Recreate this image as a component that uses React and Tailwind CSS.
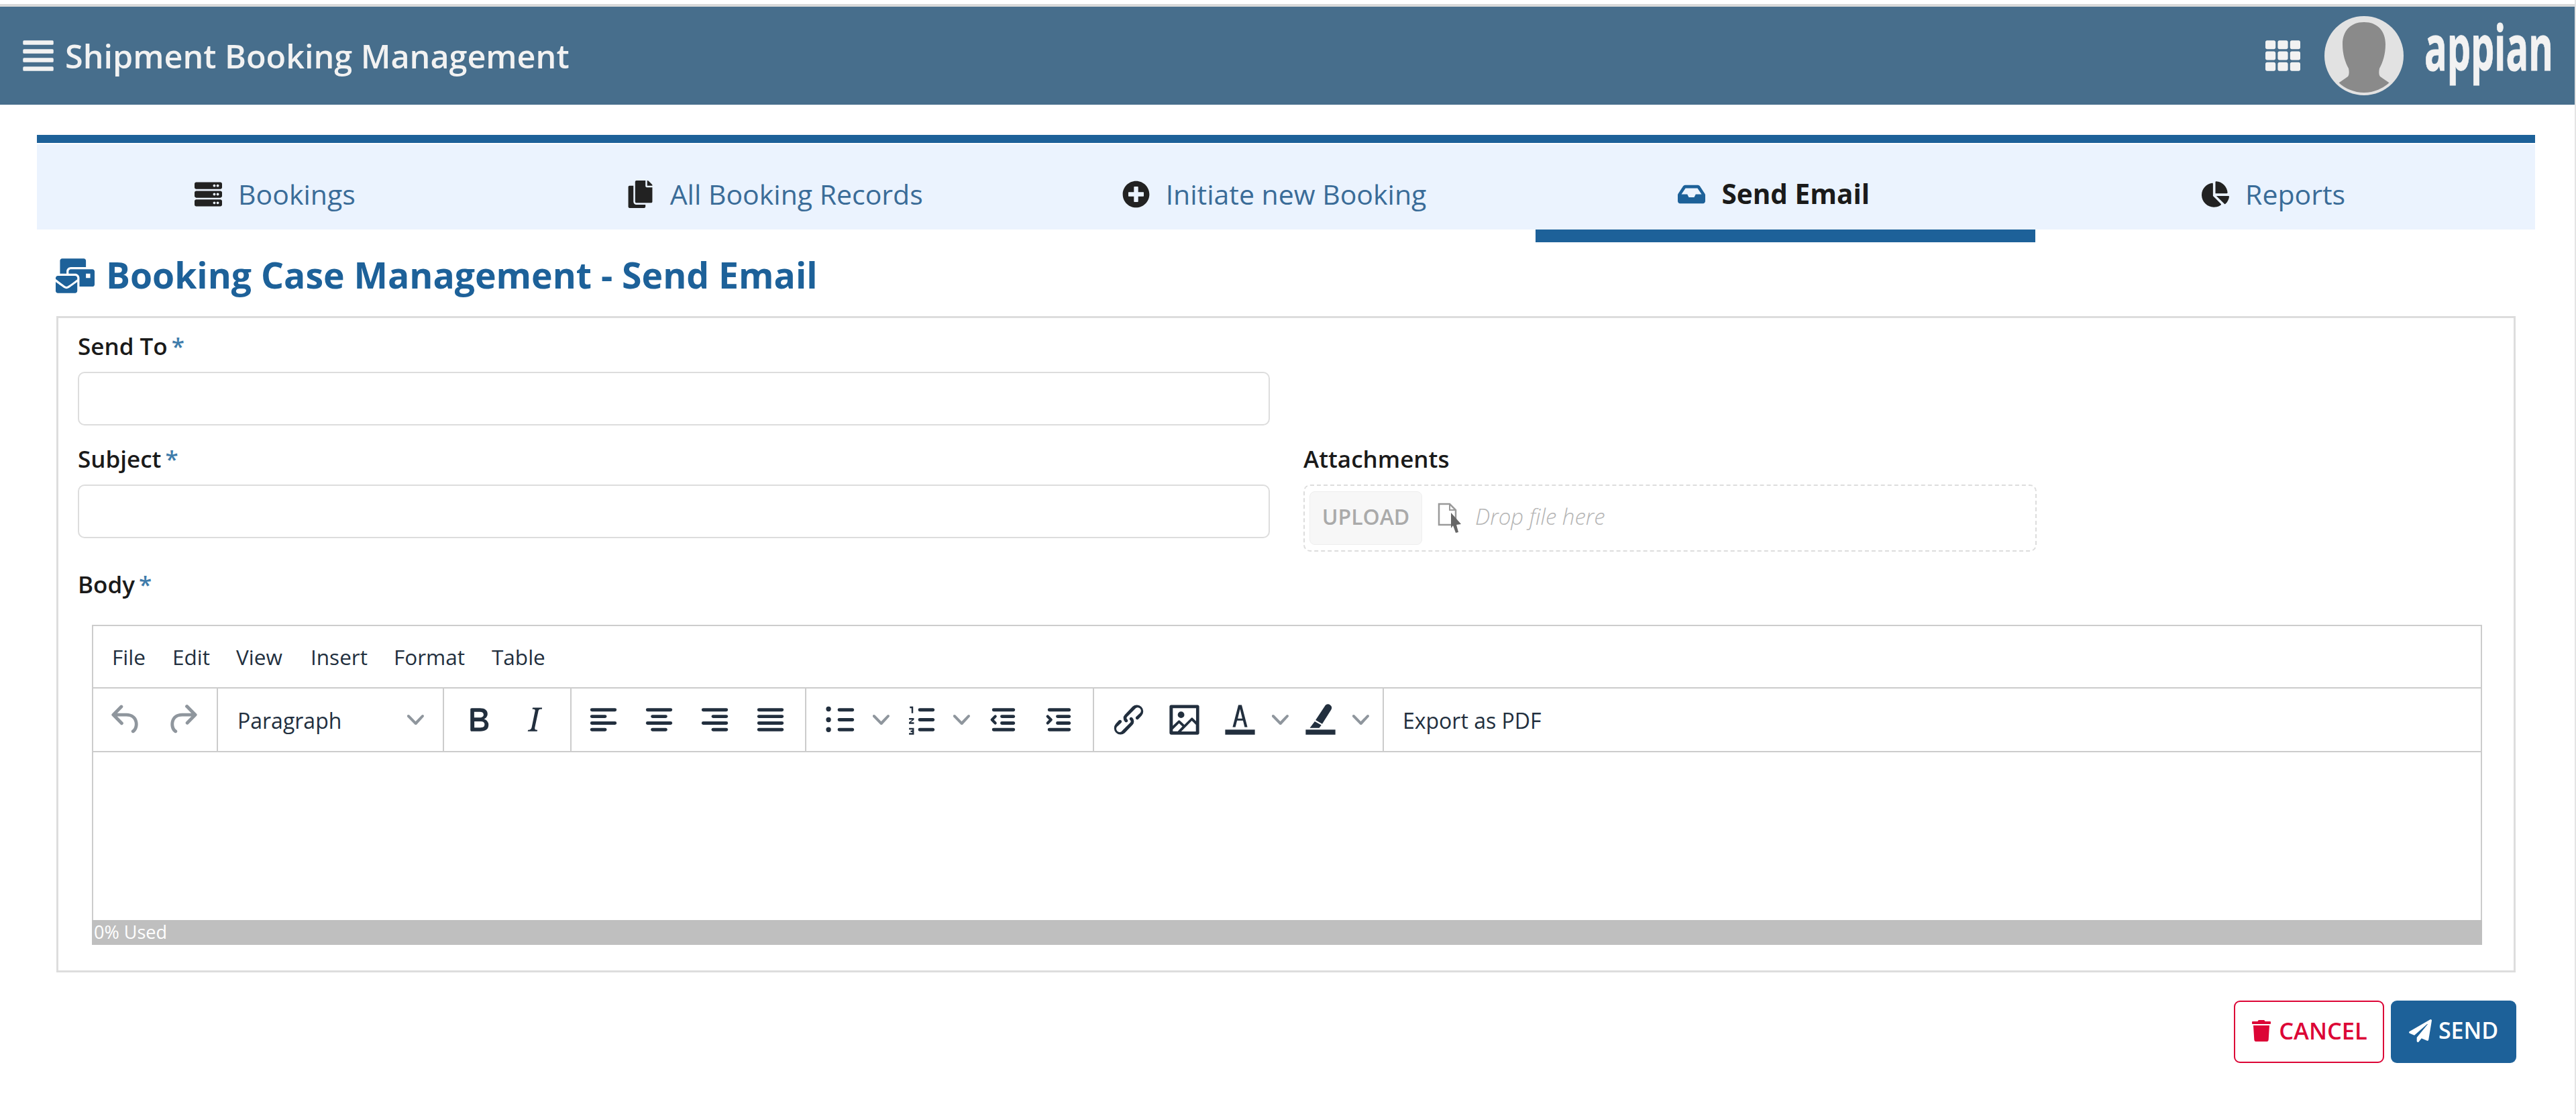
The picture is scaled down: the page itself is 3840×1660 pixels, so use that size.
import React from "react";
import {
  FaAlignJustify,
  FaTh,
  FaServer,
  FaCopy,
  FaPlusCircle,
  FaInbox,
  FaChartPie,
  FaMailBulk,
  FaTrash,
  FaPaperPlane,
} from "react-icons/fa";

const tabs = [
  { label: "Bookings", Icon: FaServer },
  { label: "All Booking Records", Icon: FaCopy },
  { label: "Initiate new Booking", Icon: FaPlusCircle },
  { label: "Send Email", Icon: FaInbox, active: true },
  { label: "Reports", Icon: FaChartPie },
];

const menus = [
  { label: "File", w: "w-[90px]" },
  { label: "Edit", w: "w-[95px]" },
  { label: "View", w: "w-[111px]" },
  { label: "Insert", w: "w-[124px]" },
  { label: "Format", w: "w-[146px]" },
  { label: "Table", w: "w-[80px]" },
];

// editor icons, all on the 24 unit grid
const Ico = ({ children, dim }) => (
  <svg viewBox="0 0 24 24" className={`w-[59px] h-[59px] fill-[#222f3e] ${dim ? "opacity-50" : ""}`}>
    {children}
  </svg>
);

const Bars = ({ rows }) => (
  <Ico>
    {rows.map((r, i) => (
      <rect key={i} x={r[0]} y={5 + i * 4} width={r[1]} height="2" rx="1" />
    ))}
  </Ico>
);

const Chevron = () => (
  <svg viewBox="0 0 10 10" className="w-[25px] h-[25px] fill-[#222f3e] opacity-50">
    <path d="M8.7 2.2c.3-.3.8-.3 1 0 .4.4.4.9 0 1.2L5.7 7.8c-.3.3-.9.3-1.2 0L.2 3.4a.8.8 0 0 1 0-1.2c.3-.3.8-.3 1.1 0L5 6l3.7-3.8z" />
  </svg>
);

const Btn = ({ w = "w-[83px]", children }) => (
  <div className={`${w} h-full flex items-center justify-center shrink-0`}>{children}</div>
);

const Group = ({ w, pl, children }) => (
  <div className={`${w} ${pl} h-full flex items-center border-r-2 border-[#ccc] shrink-0`}>{children}</div>
);

const Field = ({ label, required, children }) => (
  <div>
    <div className="h-[36px] mb-[20px] flex items-center text-[35px] font-semibold text-[#1a1a1a]">
      {label}
      {required && <span className="ml-[6px] text-[#3f7cab]">*</span>}
    </div>
    {children}
  </div>
);

const TextBox = () => (
  <input type="text" className="block w-full h-[80px] bg-white border-2 border-[#ddd] rounded-[10px] outline-none" />
);

const Toolbar = () => (
  <div className="h-[95px] flex border-b-2 border-[#ccc]">
    <Group w="w-[186px]" pl="pl-[8px]">
      <Btn>
        <Ico dim>
          <path d="M6.4 8H12c3.7 0 6.2 2 6.8 5.1.6 2.7-.4 5.6-2.3 6.8a1 1 0 0 1-1-1.8c1.1-.6 1.8-2.7 1.4-4.6-.5-2.1-2.1-3.5-4.9-3.5H6.4l3.3 3.3a1 1 0 1 1-1.4 1.4l-5-5a1 1 0 0 1 0-1.4l5-5a1 1 0 0 1 1.4 1.4L6.4 8z" />
        </Ico>
      </Btn>
      <Btn>
        <Ico dim>
          <path d="M17.6 10H12c-2.8 0-4.4 1.4-4.9 3.5-.4 2 .3 4 1.4 4.6a1 1 0 1 1-1 1.8c-2-1.2-2.9-4.1-2.3-6.8.6-3 3-5.1 6.8-5.1h5.6l-3.3-3.3a1 1 0 1 1 1.4-1.4l5 5a1 1 0 0 1 0 1.4l-5 5a1 1 0 0 1-1.4-1.4l3.3-3.3z" />
        </Ico>
      </Btn>
    </Group>
    <Group w="w-[337px]" pl="pl-[29px]">
      <span className="text-[32px] text-[#222f3e] w-[253px] pt-[3px]">Paragraph</span>
      <Chevron />
    </Group>
    <Group w="w-[190px]" pl="pl-[10px]">
      <Btn>
        <Ico>
          <path d="M7.8 19c-.3 0-.5 0-.6-.2l-.2-.5V5.7c0-.2 0-.4.2-.5l.6-.2h5c1.5 0 2.7.3 3.5 1 .7.6 1.1 1.4 1.1 2.5a3 3 0 0 1-.6 1.9c-.4.6-1 1-1.6 1.2.4.1.9.3 1.3.6s.8.7 1 1.2c.4.4.5 1 .5 1.6 0 1.3-.4 2.3-1.3 3-.8.7-2.1 1-3.8 1H7.8zm5-8.3c.6 0 1.2-.1 1.6-.5.4-.3.6-.7.6-1.3 0-1.1-.8-1.7-2.3-1.7H9.3v3.5h3.4zm.5 6c.7 0 1.3-.1 1.7-.4.4-.4.6-.9.6-1.5s-.2-1-.7-1.4c-.4-.3-1-.4-2-.4H9.4v3.8h4z" />
        </Ico>
      </Btn>
      <Btn>
        <Ico>
          <path d="M16.7 4.7l-.1.9h-.3c-.6 0-1 0-1.4.3-.3.3-.4.6-.5 1.1l-2.1 9.8v.6c0 .5.4.8 1.4.8h.2l-.2.8H8l.2-.8h.2c1.1 0 1.8-.5 2-1.5l2-9.8.1-.5c0-.6-.4-.8-1.4-.8h-.3l.2-.9h5.8z" />
        </Ico>
      </Btn>
    </Group>
    <Group w="w-[350px]" pl="pl-[6px]">
      <Btn><Bars rows={[[4, 16], [4, 10], [4, 16], [4, 10]]} /></Btn>
      <Btn><Bars rows={[[4, 16], [7, 10], [4, 16], [7, 10]]} /></Btn>
      <Btn><Bars rows={[[4, 16], [10, 10], [4, 16], [10, 10]]} /></Btn>
      <Btn><Bars rows={[[4, 16], [4, 16], [4, 16], [4, 16]]} /></Btn>
    </Group>
    <Group w="w-[429px]" pl="pl-[10px]">
      <Btn>
        <Ico>
          <path d="M11 5h8c.6 0 1 .4 1 1s-.4 1-1 1h-8a1 1 0 0 1 0-2zm0 6h8c.6 0 1 .4 1 1s-.4 1-1 1h-8a1 1 0 0 1 0-2zm0 6h8c.6 0 1 .4 1 1s-.4 1-1 1h-8a1 1 0 0 1 0-2zM4.5 7a1.5 1.5 0 1 1 0-3 1.5 1.5 0 0 1 0 3zm0 6.500a1.500 1.500 0 1 1 0-3 1.500 1.500 0 0 1 0 3zm0 6a1.500 1.500 0 1 1 0-3 1.500 1.500 0 0 1 0 3z" />
        </Ico>
      </Btn>
      <Btn w="w-[37px]"><Chevron /></Btn>
      <Btn>
        <Ico>
          <path d="M11 5h8c.6 0 1 .4 1 1s-.4 1-1 1h-8a1 1 0 0 1 0-2zm0 6h8c.6 0 1 .4 1 1s-.4 1-1 1h-8a1 1 0 0 1 0-2zm0 6h8c.6 0 1 .4 1 1s-.4 1-1 1h-8a1 1 0 0 1 0-2zM5 4h2v4H6V5H5V4zm-.500 7h3v1l-2 1.500h2v1h-3v-1l2-1.500h-2v-1zm0 6h3v4h-3v-1h2v-.500h-1v-1h1V18h-2v-1z" />
        </Ico>
      </Btn>
      <Btn w="w-[37px]"><Chevron /></Btn>
      <Btn>
        <Ico>
          <path d="M7 5h12c.6 0 1 .4 1 1s-.4 1-1 1H7a1 1 0 1 1 0-2zm5 4h7c.6 0 1 .4 1 1s-.4 1-1 1h-7a1 1 0 0 1 0-2zm0 4h7c.6 0 1 .4 1 1s-.4 1-1 1h-7a1 1 0 0 1 0-2zm-5 4h12a1 1 0 0 1 0 2H7a1 1 0 0 1 0-2zm1.600-7.600a.8.8 0 0 1 0 1.200L7.200 12l1.400 1.400a.8.8 0 0 1-1.200 1.200l-2-2a.8.8 0 0 1 0-1.200l2-2a.8.8 0 0 1 1.200 0z" />
        </Ico>
      </Btn>
      <Btn>
        <Ico>
          <path d="M7 5h12c.6 0 1 .4 1 1s-.4 1-1 1H7a1 1 0 1 1 0-2zm5 4h7c.6 0 1 .4 1 1s-.4 1-1 1h-7a1 1 0 0 1 0-2zm0 4h7c.6 0 1 .4 1 1s-.4 1-1 1h-7a1 1 0 0 1 0-2zm-5 4h12a1 1 0 0 1 0 2H7a1 1 0 0 1 0-2zM5.400 9.400a.8.8 0 0 1 1.200 0l2 2a.8.8 0 0 1 0 1.200l-2 2a.8.8 0 0 1-1.200-1.200L6.800 12 5.400 10.600a.8.8 0 0 1 0-1.200z" />
        </Ico>
      </Btn>
    </Group>
    <Group w="w-[432px]" pl="pl-[10px]">
      <Btn>
        <Ico>
          <path d="M6.200 12.300a1 1 0 0 1 1.400 1.400l-2 2a2 2 0 1 0 2.600 2.800l4.800-4.800a1 1 0 0 0 0-1.400 1 1 0 1 1 1.400-1.300 2.900 2.900 0 0 1 0 4L9.600 20a3.900 3.900 0 0 1-5.500-5.500l2-2.200zm11.600-.6a1 1 0 0 1-1.400-1.400l2.100-2a2 2 0 1 0-2.700-2.800L11 10.300a1 1 0 0 0 0 1.400A1 1 0 1 1 9.600 13a2.900 2.900 0 0 1 0-4L14.400 4a3.900 3.900 0 0 1 5.500 5.500l-2.100 2.200z" />
        </Ico>
      </Btn>
      <Btn>
        <Ico>
          <path d="M5 15.700l3.300-3.200c.3-.3.7-.3 1 0L12 15l4.100-4c.3-.4.8-.4 1 0l2 1.900V5H5v10.700zM5 18V19h3l2.800-2.900-2-2L5 17.900zm14-3l-2.500-2.400-6.400 6.500H19v-4zM4 3h16c.6 0 1 .4 1 1v16c0 .6-.4 1-1 1H4a1 1 0 0 1-1-1V4c0-.6.4-1 1-1zm6 8a2 2 0 1 0 0-4 2 2 0 0 0 0 4z" />
        </Ico>
      </Btn>
      <Btn>
        <Ico>
          <path d="M3 18h18v3H3zM11 3h2l3.500 13.500h-1.700l-1-4h-3.600l-1 4H7.500L11 3zm1 2.500l-1.400 5.800h2.800L12 5.500z" />
        </Ico>
      </Btn>
      <Btn w="w-[37px]"><Chevron /></Btn>
      <Btn>
        <Ico>
          <path d="M3 18h18v3H3zM15 3.200a2 2 0 0 1 2.800-.2 2.300 2.300 0 0 1 .6 3L13 14.500l-4-2.300L15 3.200zM8.500 13l4 2.300-1.300 1.700H5.500l3-4z" />
        </Ico>
      </Btn>
      <Btn w="w-[37px]"><Chevron /></Btn>
    </Group>
    <div className="h-full flex items-center pl-[28px] pt-[3px] text-[32px] text-[#222f3e]">Export as PDF</div>
  </div>
);

const DropIcon = () => (
  <svg viewBox="0 0 36 46" className="w-[36px] h-[46px]">
    <path d="M2 2h16l9 9v22H2z" fill="#fff" stroke="#9a9a9a" strokeWidth="2.500" />
    <path d="M18 2v9h9" fill="none" stroke="#9a9a9a" strokeWidth="2" />
    <path d="M20 15l15 17-7 1 3 11-4 1-4-11-3 4z" fill="#666" />
  </svg>
);

const Avatar = () => (
  <svg viewBox="0 0 118 118" className="w-[118px] h-[118px]">
    <circle cx="59" cy="59" r="59" fill="#e2e2e2" />
    <clipPath id="avatarClip">
      <circle cx="59" cy="59" r="55" />
    </clipPath>
    <path
      clipPath="url(#avatarClip)"
      d="M59 9c-20 0-32 13-32 33 0 15 4 27 9 36 1 5 1 9-1 12L15 104c8 10 27 14 44 14s36-4 44-14L83 90c-2-3-2-7-1-12 5-9 9-21 9-36C91 22 79 9 59 9z"
      fill="#8a8a8a"
    />
  </svg>
);

const App = () => {
  return (
    <div className="w-[3840px] h-[1660px] bg-white font-['Open_Sans',sans-serif] overflow-hidden border-r-2 border-[#e4e4e4]">
      {/* TOP BAR */}
      <div className="h-[6px]" />
      <div className="h-[4px] bg-[#d9d9d9]" />
      <div className="h-[146px] bg-[#476e8c] flex items-center pl-[31px] pr-[32px] text-[#f2f2f2]">
        <FaAlignJustify className="text-[52px]" />
        <p className="ml-[14px] text-[48.500px] font-semibold">Shipment Booking Management</p>
        <FaTh className="ml-auto text-[52px]" />
        <div className="ml-[36px] mr-[31px]">
          <Avatar />
        </div>
        <svg viewBox="0 0 192 100" className="w-[192px] h-[100px] overflow-visible">
          <text
            transform="translate(0 72) scale(.594 1)"
            fontFamily="Open Sans"
            fontWeight="700"
            fontSize="94"
            fill="#f2f2f2"
            stroke="#f2f2f2"
            strokeWidth="1"
          >
            appian
          </text>
        </svg>
      </div>

      <div className="pl-[55px] pr-[59px] pt-[45px]">
        {/* TABS */}
        <div className="h-[12px] mb-[2px] bg-[#1d6199]" />
        <div className="grid grid-cols-5">
          {tabs.map(({ label, Icon, active }) => (
            <div key={label}>
              <div className="h-[127px] bg-[#ebf3fe] flex items-center justify-center gap-[24px] pt-[22px] pr-[35px] text-[41px]">
                <Icon className={active ? "text-[#1d6199]" : "text-[#222]"} />
                <span className={active ? "font-bold text-[#1a1a1a] text-[40.500px]" : "text-[#3a6c98]"}>{label}</span>
              </div>
              <div className={`h-[19px] ${active ? "bg-[#1d6199]" : ""}`} />
            </div>
          ))}
        </div>

        {/* HEADING */}
        <div className="h-[110px] pl-[28px] pb-[11px] flex items-center gap-[17px] text-[#1d6199]">
          <FaMailBulk className="text-[58px]" />
          <h1 className="text-[53.500px] font-bold">Booking Case Management - Send Email</h1>
        </div>

        {/* FORM */}
        <div className="mx-[29px] h-[978px] border-[3px] border-[#ddd] pl-[29px] pr-[47px] pt-[24px]">
          <div className="w-[1777px]">
            <Field label="Send To" required>
              <TextBox />
            </Field>
          </div>
          <div className="flex gap-[50px] mt-[32px]">
            <div className="w-[1777px] shrink-0">
              <Field label="Subject" required>
                <TextBox />
              </Field>
            </div>
            <div className="w-[1093px]">
              <Field label="Attachments">
                <div className="h-[100px] border-2 border-dashed border-[#ddd] rounded-[10px] flex items-center pl-[7px]">
                  <div className="w-[168px] h-[80px] bg-[#f7f7f7] border border-[#eee] rounded-[8px] pb-[4px] flex items-center justify-center text-[32px] font-semibold text-[#aaa]">
                    UPLOAD
                  </div>
                  <div className="ml-[23px]">
                    <DropIcon />
                  </div>
                  <span className="ml-[20px] pb-[4px] text-[33px] italic font-light text-[#b5b5b5]">Drop file here</span>
                </div>
              </Field>
            </div>
          </div>
          <div className="mt-[31px] h-[36px] flex items-center text-[35px] font-semibold text-[#1a1a1a]">
            Body<span className="ml-[6px] text-[#3f7cab]">*</span>
          </div>

          {/* EDITOR */}
          <div className="mt-[42px] ml-[21px] h-[477px] flex flex-col">
            <div className="flex-1 border-x-2 border-t-2 border-[#ccc] flex flex-col">
              <div className="h-[93px] flex items-center pl-[28px] text-[31.500px] text-[#222f3e] border-b-2 border-[#ccc]">
                {menus.map((m) => (
                  <span key={m.label} className={m.w}>
                    {m.label}
                  </span>
                ))}
              </div>
              <Toolbar />
            </div>
            <div className="h-[37px] bg-[#bfbfbf] pl-[3px] flex items-center text-[27px] text-white">0% Used</div>
          </div>
        </div>

        {/* ACTIONS */}
        <div className="flex justify-end gap-[10px] mt-[42px] mr-[28px]">
          <button className="w-[224px] h-[93px] bg-white border-2 border-[#dc0536] rounded-[9px] pb-[4px] flex items-center justify-center gap-[10px] text-[34.500px] font-semibold text-[#dc0536]">
            <FaTrash className="text-[32px]" />
            CANCEL
          </button>
          <button className="w-[187px] h-[93px] bg-[#1d6199] rounded-[9px] pb-[4px] flex items-center justify-center gap-[10px] text-[34px] font-semibold text-white">
            <FaPaperPlane className="text-[34px]" />
            SEND
          </button>
        </div>
      </div>
    </div>
  );
};

export default App;
